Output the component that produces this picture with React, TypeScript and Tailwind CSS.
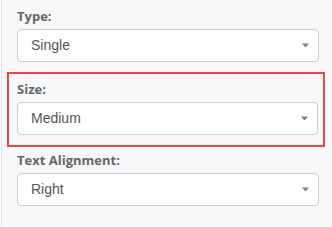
function Caret() {
  return (
    <svg width="7" height="5" viewBox="0 0 7 5" className="shrink-0">
      <path d="M0 0.5 H7 L3.5 4.5 Z" fill="#808080" />
    </svg>
  );
}

function Field({ label, value }: { label: string; value: string }) {
  return (
    <div>
      <div className="h-[18px] text-[13px] leading-[18px] font-bold text-[#666] font-['Open_Sans',sans-serif]">
        {label}
      </div>
      <div className="mt-1 flex h-[33px] items-center justify-between rounded-[4px] border border-[#cccccc] bg-white pl-[13px] pr-[9px]">
        <span className="text-[14px] text-[#555] font-['Liberation_Sans',Arial,sans-serif]">{value}</span>
        <Caret />
      </div>
    </div>
  );
}

export default function App() {
  return (
    <div className="h-[227px] w-[332px] bg-white pl-[1px]">
      <div className="h-full border-l border-[#dfe2e6] bg-[#f7f8fa] pl-[5px] pr-[7px] pt-[7px]">
        <div className="pl-[10px] pr-[6px]">
          <Field label="Type:" value="Single" />
        </div>
        <div className="mt-[10px] border-2 border-[#ef4347] pb-[10px] pl-[8px] pr-[5px] pt-[6px]">
          <Field label="Size:" value="Medium" />
        </div>
        <div className="pl-[10px] pr-[6px] pt-[4px]">
          <Field label="Text Alignment:" value="Right" />
        </div>
      </div>
    </div>
  );
}
